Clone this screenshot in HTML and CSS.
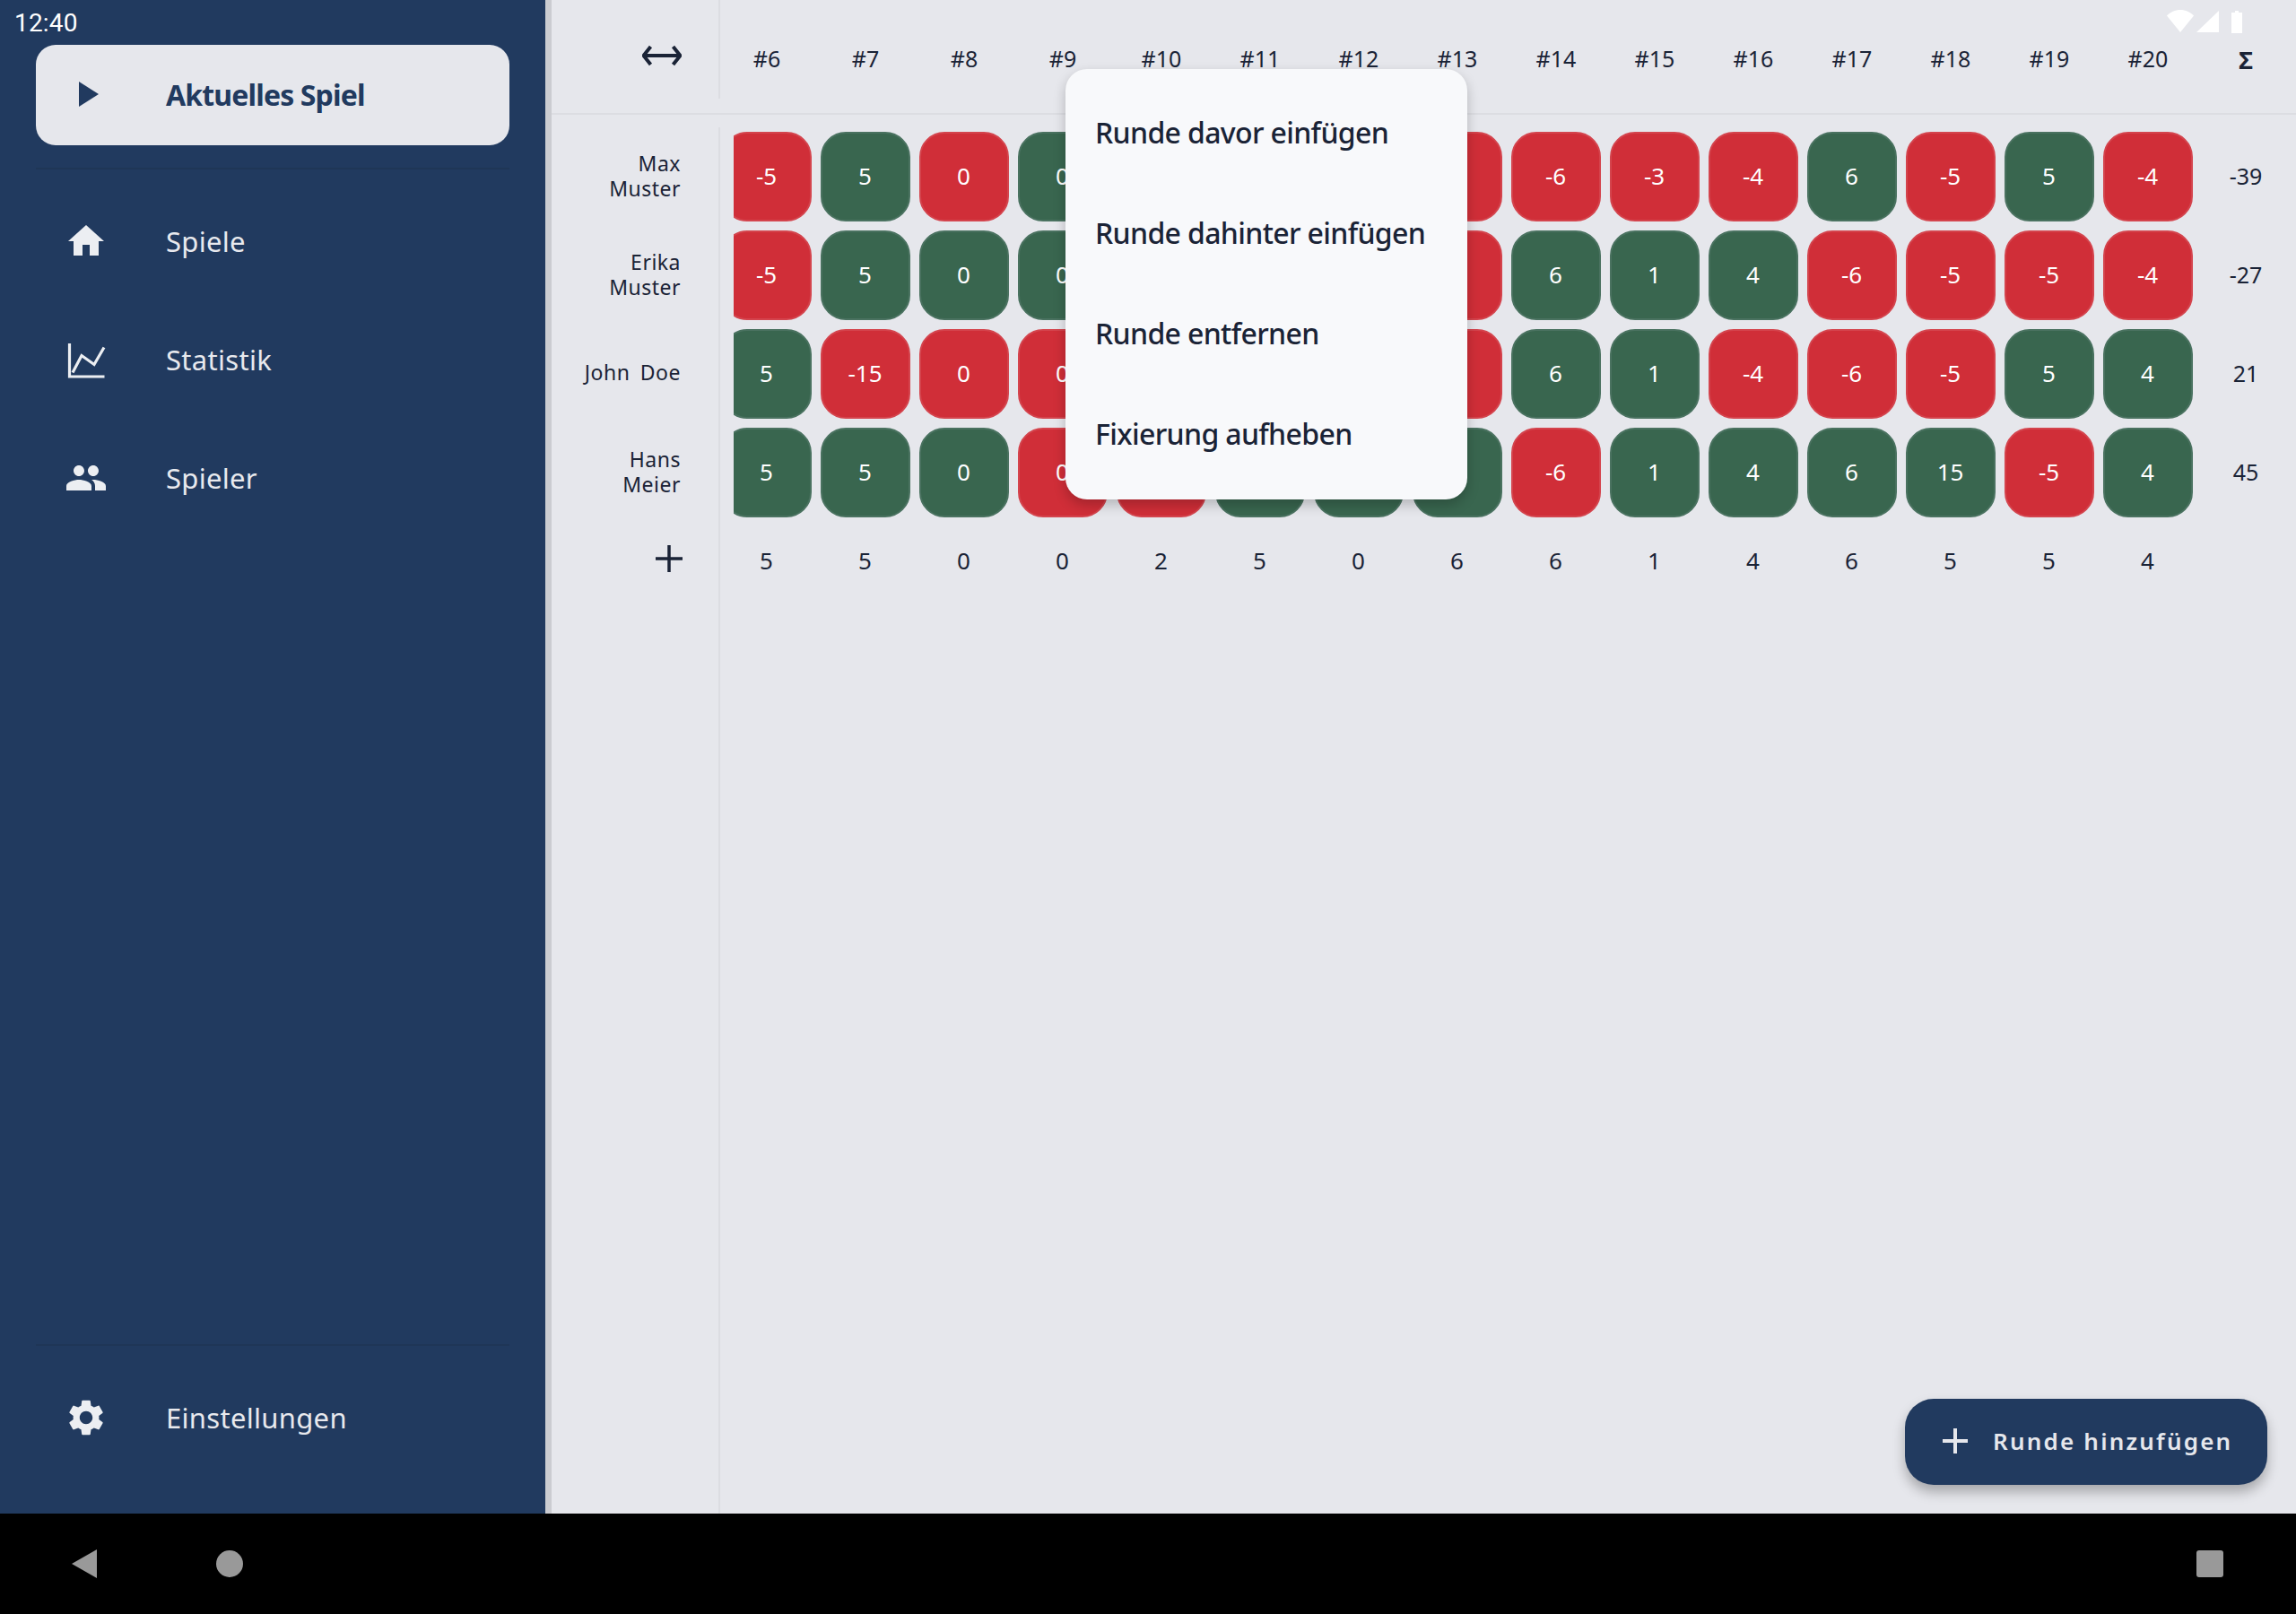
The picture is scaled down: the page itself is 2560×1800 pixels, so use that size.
FILE: index.html
```html
<!DOCTYPE html>
<html lang="de">
<head>
<meta charset="utf-8">
<title>Aktuelles Spiel</title>
<link rel="stylesheet" href="styles.css">
</head>
<body>
<div class="screen">
  <div class="app">
    <aside class="sidebar">
      <a class="nav-item active">
        <svg class="icon" viewBox="0 0 24 24"><path d="M8 5v14l11-7z"/></svg>
        <span>Aktuelles Spiel</span>
      </a>
      <hr class="rule first">
      <a class="nav-item">
        <svg class="icon" viewBox="0 0 24 24"><path d="M10 20v-6h4v6h5v-8h3L12 3 2 12h3v8z"/></svg>
        <span>Spiele</span>
      </a>
      <a class="nav-item">
        <svg class="icon" viewBox="0 0 48 48"><path class="chart" d="M5.500 6v37h39M9 38.500l10-19 14 10 11-19"/></svg>
        <span>Statistik</span>
      </a>
      <a class="nav-item">
        <svg class="icon" viewBox="0 0 24 24"><path d="M16 11c1.660 0 2.990-1.340 2.990-3S17.660 5 16 5c-1.660 0-3 1.340-3 3s1.340 3 3 3zm-8 0c1.660 0 2.990-1.340 2.990-3S9.660 5 8 5C6.340 5 5 6.340 5 8s1.340 3 3 3zm0 2c-2.330 0-7 1.170-7 3.500V19h14v-2.500c0-2.330-4.670-3.500-7-3.500zm8 0c-.29 0-.62.02-.97.05 1.160.84 1.970 1.970 1.970 3.450V19h6v-2.500c0-2.330-4.670-3.500-7-3.500z"/></svg>
        <span>Spieler</span>
      </a>
      <hr class="rule last">
      <a class="nav-item">
        <svg class="icon" viewBox="0 0 24 24"><path d="M19.140 12.940c.04-.3.06-.61.06-.94 0-.32-.02-.64-.07-.94l2.030-1.580c.18-.14.23-.41.12-.61l-1.920-3.320c-.12-.22-.37-.29-.59-.22l-2.390.96c-.5-.38-1.030-.7-1.620-.94l-.36-2.540c-.04-.24-.24-.41-.48-.41h-3.840c-.24 0-.43.17-.47.41l-.36 2.540c-.59.24-1.130.57-1.620.94l-2.390-.96c-.22-.08-.47 0-.59.22L2.740 8.870c-.12.21-.08.47.12.61l2.030 1.580c-.05.3-.09.63-.09.94s.02.64.07.94l-2.030 1.580c-.18.14-.23.41-.12.61l1.920 3.320c.12.22.37.29.59.22l2.390-.96c.5.38 1.030.7 1.620.94l.36 2.540c.05.24.24.41.48.41h3.840c.24 0 .44-.17.47-.41l.36-2.540c.59-.24 1.130-.56 1.620-.94l2.390.96c.22.08.47 0 .59-.22l1.920-3.320c.12-.22.07-.47-.12-.61l-2.010-1.580zM12 15.600c-1.980 0-3.600-1.620-3.600-3.600s1.620-3.600 3.600-3.600 3.600 1.620 3.600 3.600-1.620 3.600-3.600 3.600z"/></svg>
        <span>Einstellungen</span>
      </a>
    </aside>

    <main class="main">
      <header class="table-head">
        <div class="head-tool">
          <svg class="arrows" viewBox="0 0 44 24"><path d="M9.500 2 1.500 12l8 10M34.500 2l8 10-8 10M2 12h40"/></svg>
        </div>
        <div class="head-cols">
          <span>#6</span><span>#7</span><span>#8</span><span>#9</span><span>#10</span>
          <span>#11</span><span>#12</span><span>#13</span><span>#14</span><span>#15</span>
          <span>#16</span><span>#17</span><span>#18</span><span>#19</span><span>#20</span>
        </div>
        <div class="sigma">Σ</div>
      </header>

      <section class="table-body">
        <div class="names">
          <div class="name">Max<br>Muster</div>
          <div class="name">Erika<br>Muster</div>
          <div class="name">John Doe</div>
          <div class="name">Hans<br>Meier</div>
          <div class="add-row">
            <svg class="plus" viewBox="0 0 30 30"><path d="M15 0v30M0 15h30"/></svg>
          </div>
        </div>
        <div class="scroller">
          <div class="grid">
            <div class="cell loss">-5</div><div class="cell win">5</div><div class="cell loss">0</div><div class="cell win">0</div><div class="cell loss">-2</div><div class="cell win">5</div><div class="cell loss">0</div><div class="cell loss">-6</div><div class="cell loss">-6</div><div class="cell loss">-3</div><div class="cell loss">-4</div><div class="cell win">6</div><div class="cell loss">-5</div><div class="cell win">5</div><div class="cell loss">-4</div>
            <div class="cell loss">-5</div><div class="cell win">5</div><div class="cell win">0</div><div class="cell win">0</div><div class="cell win">2</div><div class="cell loss">-5</div><div class="cell win">0</div><div class="cell loss">-6</div><div class="cell win">6</div><div class="cell win">1</div><div class="cell win">4</div><div class="cell loss">-6</div><div class="cell loss">-5</div><div class="cell loss">-5</div><div class="cell loss">-4</div>
            <div class="cell win">5</div><div class="cell loss">-15</div><div class="cell loss">0</div><div class="cell loss">0</div><div class="cell win">2</div><div class="cell loss">-5</div><div class="cell loss">0</div><div class="cell loss">-6</div><div class="cell win">6</div><div class="cell win">1</div><div class="cell loss">-4</div><div class="cell loss">-6</div><div class="cell loss">-5</div><div class="cell win">5</div><div class="cell win">4</div>
            <div class="cell win">5</div><div class="cell win">5</div><div class="cell win">0</div><div class="cell loss">0</div><div class="cell loss">-2</div><div class="cell win">5</div><div class="cell win">0</div><div class="cell win">6</div><div class="cell loss">-6</div><div class="cell win">1</div><div class="cell win">4</div><div class="cell win">6</div><div class="cell win">15</div><div class="cell loss">-5</div><div class="cell win">4</div>
            <div class="total">5</div><div class="total">5</div><div class="total">0</div><div class="total">0</div><div class="total">2</div><div class="total">5</div><div class="total">0</div><div class="total">6</div><div class="total">6</div><div class="total">1</div><div class="total">4</div><div class="total">6</div><div class="total">5</div><div class="total">5</div><div class="total">4</div>
          </div>
        </div>
        <div class="sums">
          <div class="sum">-39</div>
          <div class="sum">-27</div>
          <div class="sum">21</div>
          <div class="sum">45</div>
        </div>
      </section>

      <div class="menu">
        <div class="menu-item">Runde davor einfügen</div>
        <div class="menu-item">Runde dahinter einfügen</div>
        <div class="menu-item">Runde entfernen</div>
        <div class="menu-item">Fixierung aufheben</div>
      </div>

      <button class="fab">
        <svg class="fab-plus" viewBox="0 0 28 28"><path d="M14 0v28M0 14h28"/></svg>
        <span>Runde hinzufügen</span>
      </button>
    </main>
  </div>

  <footer class="navbar">
    <svg class="nav-back" viewBox="0 0 28 32"><path d="M28 0 0 16l28 16z"/></svg>
    <span class="nav-home"></span>
    <span class="nav-recent"></span>
  </footer>

  <div class="time">12:40</div>
  <svg class="status-icons" viewBox="0 0 88 26">
    <path d="M0 6.500C4 2.500 9 0 15 0s11 2.500 15 6.500L15 25z"/>
    <path d="M58 1v24H33z"/>
    <path d="M76 3V1h4v2h4v23H72V3z"/>
  </svg>
</div>
</body>
</html>
```

FILE: styles.css
```css
* {
  box-sizing: border-box;
}

html,
body {
  margin: 0;
  height: 100%;
}

body {
  font-family: "Noto Sans", "Open Sans", sans-serif;
  color: #1a2336;
  background: #000;
}

.screen {
  position: relative;
  width: 2560px;
  height: 1800px;
  display: flex;
  flex-direction: column;
  overflow: hidden;
}

.app {
  flex: 1;
  display: flex;
  min-height: 0;
}

/* Sidebar */
.sidebar {
  width: 615px;
  flex: none;
  display: flex;
  flex-direction: column;
  padding: 50px 40px 40px;
  background: #213a5f;
  border-right: 7px solid #cbccd1;
  color: #e8e9ee;
}

.nav-item {
  display: flex;
  align-items: center;
  height: 132px;
  padding: 0 0 2px 32px;
  font-size: 31px;
  letter-spacing: 0.3px;
  flex: none;
}

.nav-item .icon {
  width: 48px;
  height: 48px;
  margin-right: 65px;
  fill: #eceef2;
  flex: none;
}

.nav-item .chart {
  fill: none;
  stroke: #eceef2;
  stroke-width: 3.200;
}

.nav-item.active {
  height: 112px;
  border-radius: 22px;
  background: #e6e7ec;
  color: #213a5f;
  font-weight: 700;
  font-size: 32px;
  letter-spacing: -0.85px;
}

.nav-item.active .icon {
  fill: #213a5f;
}

.rule {
  width: 100%;
  height: 2px;
  border: 0;
  flex: none;
  background: #1f3656;
}

.rule.first {
  margin: 25px 0 15px;
}

.rule.last {
  margin: auto 0 15px;
}

/* Main table */
.main {
  position: relative;
  flex: 1;
  min-width: 0;
  display: flex;
  flex-direction: column;
  background: #e6e7ec;
}

.table-head {
  flex: none;
  height: 128px;
  display: flex;
  align-items: flex-start;
  border-bottom: 2px solid #dcdde2;
}

.head-tool {
  flex: none;
  width: 188px;
  height: 110px;
  display: flex;
  justify-content: flex-end;
  padding: 50px 41px 0 0;
  border-right: 2px solid #dcdde2;
}

.arrows {
  width: 44px;
  height: 24px;
  fill: none;
  stroke: #1a2336;
  stroke-width: 4;
}

.head-cols {
  flex: none;
  width: 1642px;
  display: grid;
  grid-template-columns: repeat(15, 100px);
  column-gap: 10px;
  padding-left: 2px;
  font-size: 25px;
  line-height: 32px;
  text-align: center;
  margin-top: 49px;
}

.sigma {
  flex: none;
  width: 110px;
  margin: 49px 0 0 4px;
  font-size: 27px;
  font-weight: 700;
  line-height: 36px;
  text-align: center;
}

.table-body {
  flex: 1;
  min-height: 0;
  display: flex;
  align-items: stretch;
}

.names {
  flex: none;
  width: 188px;
  margin-top: 14px;
  padding: 5px 42px 0 0;
  border-right: 2px solid #dcdde2;
  display: flex;
  flex-direction: column;
  gap: 10px;
}

.name {
  height: 100px;
  text-align: right;
  font-size: 23px;
  line-height: 28px;
  letter-spacing: 0.5px;
  word-spacing: 5px;
  padding-top: 21px;
}

.name:nth-child(3) {
  padding-top: 34px;
}

.add-row {
  display: flex;
  justify-content: flex-end;
  padding: 21px 0 0;
  margin-right: -2px;
}

.plus {
  width: 30px;
  height: 30px;
  fill: none;
  stroke: #1a2336;
  stroke-width: 3.500;
}

.scroller {
  flex: none;
  width: 1642px;
  overflow: hidden;
  padding-top: 19px;
  clip-path: inset(0 0 0 15px);
}

.grid {
  margin-left: 2px;
  display: grid;
  grid-template-columns: repeat(15, 100px);
  grid-auto-rows: 100px;
  gap: 10px;
}

.cell {
  display: flex;
  align-items: center;
  justify-content: center;
  padding: 0 1px 2px 0;
  border-radius: 28px;
  color: #fff;
  font-size: 26px;
  border: 2px solid;
}

.win {
  background: #39664f;
  border-color: #4a7260;
}

.loss {
  background: #d02e38;
  border-color: #d4444d;
}

.total {
  height: 76px;
  display: flex;
  align-items: center;
  justify-content: center;
  padding-right: 1px;
  font-size: 26px;
}

.sums {
  flex: none;
  width: 110px;
  margin-left: 4px;
  padding-top: 19px;
  display: flex;
  flex-direction: column;
  gap: 10px;
}

.sum {
  height: 100px;
  padding-bottom: 2px;
  display: flex;
  align-items: center;
  justify-content: center;
  font-size: 25px;
}

/* Context menu */
.menu {
  position: absolute;
  left: 573px;
  top: 77px;
  width: 448px;
  padding: 16px 0;
  border-radius: 24px;
  background: #f8f9fb;
  box-shadow: 0 6px 14px rgba(0, 0, 0, 0.22);
}

.menu-item {
  height: 112px;
  display: flex;
  align-items: center;
  padding: 0 0 3px 33px;
  font-size: 32px;
  font-weight: 500;
  letter-spacing: -0.65px;
  white-space: nowrap;
}

/* Floating button */
.fab {
  position: absolute;
  right: 32px;
  bottom: 32px;
  width: 404px;
  height: 96px;
  padding: 0 0 2px 42px;
  display: flex;
  align-items: center;
  border: 0;
  border-radius: 32px;
  background: #213a5f;
  color: #e6e7ec;
  font-family: inherit;
  font-size: 26px;
  font-weight: 600;
  letter-spacing: 2.200px;
  box-shadow: 0 8px 14px rgba(0, 0, 0, 0.28);
}

.fab-plus {
  width: 28px;
  height: 28px;
  margin-right: 28px;
  fill: none;
  stroke: #e6e7ec;
  stroke-width: 4;
}

/* Android bars */
.navbar {
  flex: none;
  height: 112px;
  display: flex;
  align-items: center;
  background: #000;
  padding: 0 81px 0 80px;
}

.nav-back {
  width: 28px;
  height: 32px;
  fill: #999;
}

.nav-home {
  width: 30px;
  height: 30px;
  margin-left: 133px;
  border-radius: 50%;
  background: #999;
}

.nav-recent {
  width: 30px;
  height: 30px;
  margin-left: auto;
  border-radius: 3px;
  background: #999;
}

.time {
  position: absolute;
  left: 16px;
  top: 9px;
  font-family: Roboto, sans-serif;
  font-size: 28px;
  letter-spacing: 0.2px;
  line-height: 34px;
  color: #fff;
}

.status-icons {
  position: absolute;
  left: 2416px;
  top: 11px;
  width: 88px;
  height: 26px;
  fill: #fff;
}
```
